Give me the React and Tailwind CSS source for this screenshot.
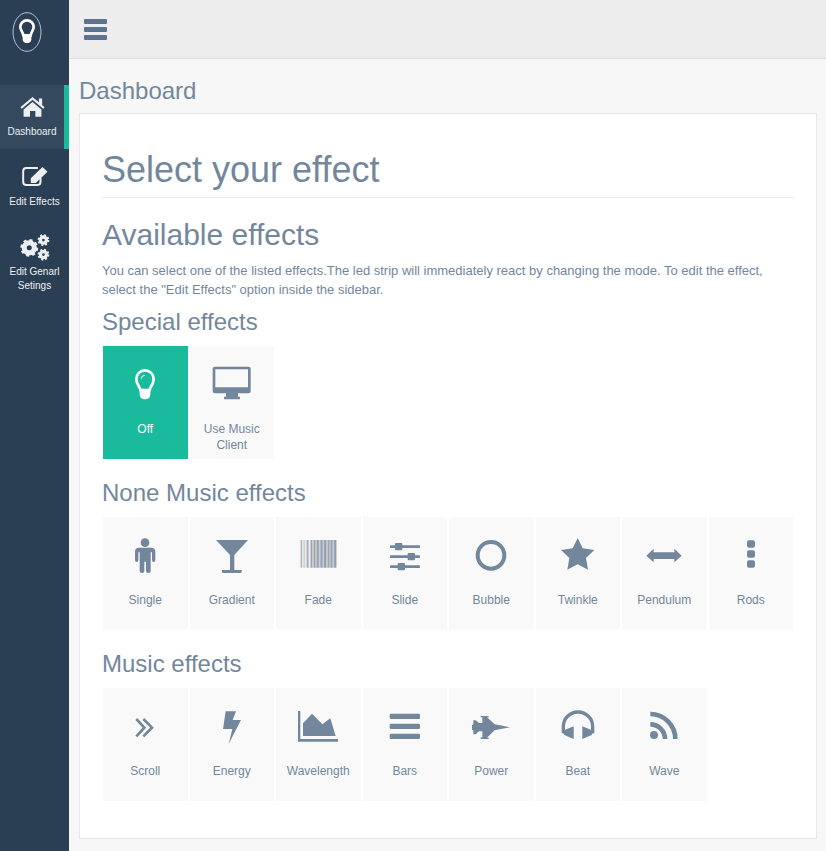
// App.jsx
const Bulb = () => (
  <>
    <path d="M122 150C121 139 110 134 110 117A26 26 0 0 1 162 117C162 134 151 139 150 150Z" fill="none" stroke="currentColor" strokeWidth="8" />
    <path d="M120 148H152V165Q150 178 136 178Q122 178 120 165Z" fill="currentColor" />
    <path d="M136 106Q126 106 124 116" fill="none" stroke="currentColor" strokeWidth="3" />
  </>
);

const Single = () => (
  <>
    <circle cx="136" cy="83" r="13" />
    <path d="M118 98H155Q167 98 167 110V135Q167 141 162 141Q157 141 157 135V112H153V168Q153 174 147 174Q139 174 139 168V140H134V168Q134 174 127 174Q120 174 120 168V112H116V135Q116 141 111 141Q106 141 106 135V110Q106 98 118 98Z" />
  </>
);

const Gradient = () => <path d="M348 75H444L403 120V165H425Q427 174 420 174H370Q364 174 366 165H390V120Z" />;

// one column per screen pixel, the stripes carry the colour fringes of the original
const fadeColumns = [
  '#e8c9b0', '#8d97a6', '#f4f6f8', '#b5d3ec', '#d9c2ae', '#f3ebe4', '#a9cbe8', '#8b8fa8', '#d0c0b8',
  '#eef3f7', '#a3b5c8', '#7b8aa0', '#e0c4ac', '#a0b9d2', '#73879c', '#c4b4a8', '#9dbfdd', '#73879c',
  '#9a93a4', '#d8c8ba', '#8ea4bc', '#73879c', '#b8a8a8', '#a6c4de', '#7b8598', '#73879c', '#d4bca8',
  '#9dbad6', '#7d8a9c', '#c2b0a8', '#94aec8', '#73879c', '#baa8a4', '#a6c6e2', '#73879c', '#73879c',
];

const Fade = () => (
  <>
    {fadeColumns.map((color, i) => (
      <rect key={i} x={602 + i * 3} y="75" width="3" height="83" fill={color} />
    ))}
  </>
);

const Slide = () => (
  <>
    <rect x="870" y="91" width="90" height="8" rx="2" />
    <rect x="870" y="121" width="90" height="8" rx="2" />
    <rect x="870" y="151" width="90" height="8" rx="2" />
    <rect x="885" y="84" width="22" height="22" rx="3" />
    <rect x="923" y="114" width="22" height="22" rx="3" />
    <rect x="893" y="144" width="22" height="22" rx="3" />
  </>
);

const Bubble = () => <circle cx="139" cy="121" r="40" fill="none" stroke="currentColor" strokeWidth="12" />;

const Twinkle = () => (
  <path d="M398 69L413 100L448 105L423 129L429 164L398 148L367 164L373 129L348 105L383 100Z" />
);

const Pendulum = () => <path d="M605 122L627 101V112H689V101L711 122L689 142V132H627V142Z" />;

const Rods = () => (
  <>
    <rect x="906" y="76" width="24" height="22" rx="6" />
    <rect x="906" y="106" width="24" height="22" rx="6" />
    <rect x="906" y="136" width="24" height="22" rx="6" />
  </>
);

const Scroll = () => (
  <path d="M110 102L134 128L110 154M131 102L157 128L131 154" fill="none" stroke="currentColor" strokeWidth="8" />
);

const Energy = () => <path d="M377 79H408L398 105H423L386 177L397 132H369Z" />;

const Wavelength = () => (
  <>
    <path d="M595 78H602V162H717V170H595Z" />
    <path d="M610 153V115L637 86L668 118L692 100L708 153Z" />
  </>
);

const Bars = () => (
  <>
    <rect x="869" y="86" width="91" height="16" rx="4" />
    <rect x="869" y="116" width="91" height="16" rx="4" />
    <rect x="869" y="146" width="91" height="16" rx="4" />
  </>
);

const Power = () => (
  <path d="M196 127L150 118L127 97H132V93H108V97H113V114H103L93 106H86V118L82 120V134L86 136V148H93L103 139H113V157H108V162H132V158H127L150 136Z" />
);

const Beat = () => (
  <>
    <path d="M355 145V125A44 44 0 0 1 443 125V145" fill="none" stroke="currentColor" strokeWidth="10" />
    <path d="M352 138L386 124V162L358 150Z" />
    <path d="M446 138L412 124V162L440 150Z" />
  </>
);

const Wave = () => (
  <>
    <circle cx="628" cy="150" r="12" />
    <path d="M617 87A75 75 0 0 1 692 162M617 118A44 44 0 0 1 661 162" fill="none" stroke="currentColor" strokeWidth="14" />
  </>
);

const Monitor = () => (
  <path fillRule="evenodd" d="M344 80H446Q452 80 452 86V154Q452 160 446 160H414V170H420V178H372V170H378V160H344Q338 160 338 154V86Q338 80 344 80ZM346 88V142H444V88Z" />
);

const Tile = ({ label, active, box, Icon }) => (
  <div className={`m-px flex h-[113px] flex-col items-center px-2 pt-5 text-center text-xs leading-4 ${active ? 'bg-[#1abb9c] text-white' : 'bg-[#f9f9f9] text-[#73879c]'}`}>
    <svg viewBox={box} className="h-10 w-10 shrink-0 fill-current">
      <Icon />
    </svg>
    <span className="mt-[15px]">{label}</span>
  </div>
);

const NavItem = ({ label, active, children }) => (
  <div className={`flex flex-col items-center text-center text-[10px] leading-[14px] text-[#ecf0f1] ${active ? 'h-16 border-r-[5px] border-[#1abb9c] bg-[#35495e] pt-3' : 'pt-[17px] pb-2'}`}>
    {children}
    <span className="w-full px-1">{label}</span>
  </div>
);

const Section = ({ title, first, children }) => (
  <>
    <h3 className={`mb-[7px] h-[32px] text-2xl leading-[32px] ${first ? 'mt-[7px]' : 'mt-[17px]'}`}>{title}</h3>
    <div className="grid grid-cols-8">{children}</div>
  </>
);

export default function App() {
  return (
    <div className="flex min-h-[851px] bg-[#f7f7f7] font-['Liberation_Sans',Arial,sans-serif] text-[#73879c]">
      <aside className="w-[69px] shrink-0 bg-[#2a3f54]">
        <div className="h-[85px] pt-3 pl-3">
          <svg viewBox="35 35 90 120" className="h-10 w-[30px] text-white">
            <ellipse cx="80" cy="95" rx="42" ry="58" fill="none" stroke="#d5dbe0" strokeWidth="2.5" />
            <path d="M69 105C68 95 60 90 60 80A20 20 0 0 1 100 80C100 90 92 95 91 105Z" fill="none" stroke="currentColor" strokeWidth="8" />
            <path d="M67 104H93V118Q91 128 80 128Q69 128 67 118Z" fill="currentColor" />
          </svg>
        </div>
        <NavItem label="Dashboard" active>
          <svg viewBox="60 293 70 56" className="mb-2 h-5 w-[25px] fill-current">
            <path d="M113 297H122V316L129 322L125 326L95 301L65 326L61 322L95 293L113 308Z" />
            <path d="M95 307L120 328V348H103V332H88V348H70V328Z" />
          </svg>
        </NavItem>
        <NavItem label="Edit Effects">
          <svg viewBox="62 47 80 63" className="mb-2 h-[21px] w-[27px]">
            <path d="M112 53H78Q68 53 68 63V94Q68 104 78 104H110Q120 104 120 94V82" fill="none" stroke="currentColor" strokeWidth="6" />
            <path d="M126 50L141 64L106 98H91V84Z" fill="currentColor" />
          </svg>
        </NavItem>
        <NavItem label="Edit Genarl Setings">
          <svg viewBox="58 252 88 80" className="mb-1 h-[27px] w-[30px]" fill="none" stroke="currentColor">
            <circle cx="85" cy="293" r="15" strokeWidth="15" />
            <circle cx="85" cy="293" r="23" strokeWidth="7" strokeDasharray="9 9.06" />
            <circle cx="127" cy="270" r="9" strokeWidth="10" />
            <circle cx="127" cy="270" r="15" strokeWidth="5" strokeDasharray="5.9 5.88" />
            <circle cx="127" cy="313" r="9" strokeWidth="10" />
            <circle cx="127" cy="313" r="15" strokeWidth="5" strokeDasharray="5.9 5.88" />
          </svg>
        </NavItem>
      </aside>
      <div className="min-w-0 flex-1">
        <header className="flex h-[59px] items-center border-b border-[#d9dee4] bg-[#ededed] pl-[15px]">
          <svg viewBox="0 0 23 21" className="h-[21px] w-[23px] fill-[#5a738e]">
            <rect width="23" height="5" rx="1" />
            <rect y="8" width="23" height="5" rx="1" />
            <rect y="16" width="23" height="5" rx="1" />
          </svg>
        </header>
        <main className="pr-[9px] pb-3 pl-[10px]">
          <h2 className="mt-[18px] mb-[9px] h-[27px] text-2xl leading-[27px]">Dashboard</h2>
          <section className="h-[726px] border border-[#e6e9ed] bg-white px-[22px] pt-[29px]">
            <h1 className="h-[55px] border-b border-[#e6e9ed] text-4xl leading-[54px]">Select your effect</h1>
            <h2 className="mt-[19px] h-[36px] text-[30px] leading-[36px]">Available effects</h2>
            <p className="mt-[8px] text-[13px] leading-[19px]">
              You can select one of the listed effects.The led strip will immediately react by changing the mode. To edit the effect, select the "Edit Effects" option inside the sidebar.
            </p>
            <Section title="Special effects" first>
              <Tile label="Off" active box="76 78 120 120" Icon={Bulb} />
              <Tile label="Use Music Client" box="336 78 120 120" Icon={Monitor} />
            </Section>
            <Section title="None Music effects">
              <Tile label="Single" box="76 66 120 120" Icon={Single} />
              <Tile label="Gradient" box="336 66 120 120" Icon={Gradient} />
              <Tile label="Fade" box="595 66 120 120" Icon={Fade} />
              <Tile label="Slide" box="855 66 120 120" Icon={Slide} />
              <Tile label="Bubble" box="79 66 120 120" Icon={Bubble} />
              <Tile label="Twinkle" box="339 66 120 120" Icon={Twinkle} />
              <Tile label="Pendulum" box="598 66 120 120" Icon={Pendulum} />
              <Tile label="Rods" box="858 66 120 120" Icon={Rods} />
            </Section>
            <Section title="Music effects">
              <Tile label="Scroll" box="76 69 120 120" Icon={Scroll} />
              <Tile label="Energy" box="336 69 120 120" Icon={Energy} />
              <Tile label="Wavelength" box="595 69 120 120" Icon={Wavelength} />
              <Tile label="Bars" box="855 69 120 120" Icon={Bars} />
              <Tile label="Power" box="79 69 120 120" Icon={Power} />
              <Tile label="Beat" box="339 69 120 120" Icon={Beat} />
              <Tile label="Wave" box="598 69 120 120" Icon={Wave} />
            </Section>
          </section>
        </main>
      </div>
    </div>
  );
}
